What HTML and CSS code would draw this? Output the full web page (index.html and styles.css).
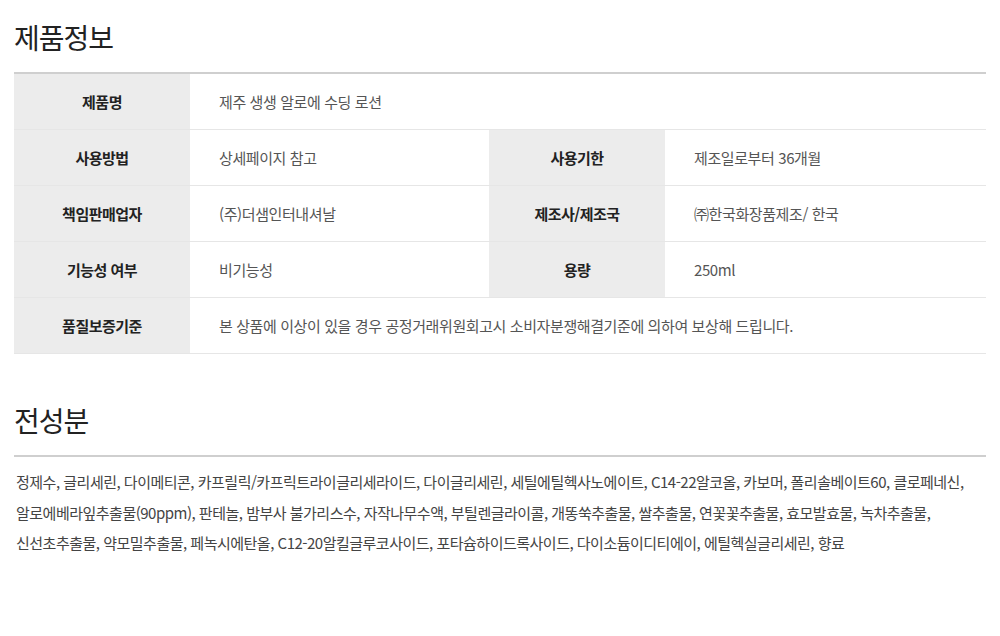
FILE: index.html
```html
<!DOCTYPE html>
<html lang="ko">
<head>
    <meta charset="UTF-8">
    <meta name="viewport" content="width=device-width, initial-scale=1.0">
    <title>제품정보</title>
    <link rel="stylesheet" href="styles.css">
</head>
<body>
    <div class="container">
        <!-- 제품정보 -->
        <h2 class="section-title">제품정보</h2>
        <table class="info-table">
            <colgroup>
                <col class="col-th">
                <col class="col-td">
                <col class="col-th">
                <col class="col-td2">
            </colgroup>
            <tr>
                <th>제품명</th>
                <td colspan="3">제주 생생 알로에 수딩 로션</td>
            </tr>
            <tr>
                <th>사용방법</th>
                <td>상세페이지 참고</td>
                <th>사용기한</th>
                <td>제조일로부터 36개월</td>
            </tr>
            <tr>
                <th>책임판매업자</th>
                <td>(주)더샘인터내셔날</td>
                <th>제조사/제조국</th>
                <td>㈜한국화장품제조/ 한국</td>
            </tr>
            <tr>
                <th>기능성 여부</th>
                <td>비기능성</td>
                <th>용량</th>
                <td>250ml</td>
            </tr>
            <tr>
                <th>품질보증기준</th>
                <td colspan="3">본 상품에 이상이 있을 경우 공정거래위원회고시 소비자분쟁해결기준에 의하여 보상해 드립니다.</td>
            </tr>
        </table>

        <!-- 전성분 -->
        <h2 class="section-title second">전성분</h2>
        <div class="ingredients">
            <p>정제수, 글리세린, 다이메티콘, 카프릴릭/카프릭트라이글리세라이드, 다이글리세린, 세틸에틸헥사노에이트, C14-22알코올, 카보머, 폴리솔베이트60, 클로페네신, 알로에베라잎추출물(90ppm), 판테놀, 밤부사 불가리스수, 자작나무수액, 부틸렌글라이콜, 개똥쑥추출물, 쌀추출물, 연꽃꽃추출물, 효모발효물, 녹차추출물, 신선초추출물, 약모밀추출물, 페녹시에탄올, C12-20알킬글루코사이드, 포타슘하이드록사이드, 다이소듐이디티에이, 에틸헥실글리세린, 향료</p>
        </div>
    </div>
</body>
</html>
```

FILE: styles.css
```css
body {
    margin: 0;
    font-family: "Noto Sans CJK KR", "Noto Sans", sans-serif;
    color: #222;
    background: #fff;
}

.container {
    padding: 0 14px;
}

.section-title {
    margin: 0;
    padding-top: 18px;
    height: 72px;
    font-size: 28px;
    font-weight: 400;
    letter-spacing: -1px;
    line-height: 38px;
    box-sizing: border-box;
    color: #222;
}

.section-title.second {
    margin-top: 31px;
    padding-top: 16px;
    height: 70px;
}

.info-table {
    width: 100%;
    border-collapse: collapse;
    border-top: 2px solid #cfcfcf;
    table-layout: fixed;
    font-size: 15px;
    letter-spacing: -0.5px;
}

.col-th {
    width: 176px;
}

.col-td {
    width: 299px;
}

.info-table th,
.info-table td {
    height: 55px;
    border-bottom: 1px solid #e6e6e6;
    padding: 0;
}

.info-table th {
    background: #ececec;
    font-weight: 700;
    color: #222;
    text-align: center;
}

.info-table td {
    padding-left: 29px;
    color: #555;
    font-weight: 400;
    letter-spacing: -0.4px;
}

.ingredients {
    border-top: 2px solid #cfcfcf;
    padding: 10px 2px 0;
}

.ingredients p {
    margin: 0;
    font-size: 15px;
    line-height: 30.5px;
    letter-spacing: -0.5px;
    word-break: keep-all;
    color: #444;
}
```
